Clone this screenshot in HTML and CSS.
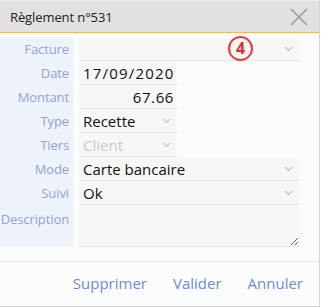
FILE: index.html
```html
<!DOCTYPE html>
<html lang="fr">
<head>
    <meta charset="UTF-8">
    <title>Règlement n°531</title>
    <link rel="stylesheet" href="styles.css">
</head>
<body>
    <div class="dialog">
        <div class="header">
            <span class="title">Règlement n°531</span>
            <svg class="close" width="18" height="18" viewBox="0 0 18 18">
                <path d="M1 1 L17 17 M17 1 L1 17" stroke="#9a9a9a" stroke-width="1.6" fill="none"/>
            </svg>
        </div>

        <div class="form">
            <div class="row">
                <div class="label">Facture</div>
                <div class="field wide select"><span></span><svg class="chev" width="9" height="6" viewBox="0 0 9 6"><path d="M1 1 L4.5 4.5 L8 1" stroke="#c4c4c4" stroke-width="1.2" fill="none"/></svg></div>
            </div>
            <div class="row">
                <div class="label">Date</div>
                <div class="field short"><span class="num">17/09/2020</span></div>
            </div>
            <div class="row">
                <div class="label">Montant</div>
                <div class="field short right"><span class="num">67.66</span></div>
            </div>
            <div class="row">
                <div class="label">Type</div>
                <div class="field short select"><span>Recette</span><svg class="chev" width="9" height="6" viewBox="0 0 9 6"><path d="M1 1 L4.5 4.5 L8 1" stroke="#c4c4c4" stroke-width="1.2" fill="none"/></svg></div>
            </div>
            <div class="row">
                <div class="label">Tiers</div>
                <div class="field short select disabled"><span>Client</span><svg class="chev" width="9" height="6" viewBox="0 0 9 6"><path d="M1 1 L4.5 4.5 L8 1" stroke="#c4c4c4" stroke-width="1.2" fill="none"/></svg></div>
            </div>
            <div class="row">
                <div class="label">Mode</div>
                <div class="field wide select"><span>Carte bancaire</span><svg class="chev" width="9" height="6" viewBox="0 0 9 6"><path d="M1 1 L4.5 4.5 L8 1" stroke="#c4c4c4" stroke-width="1.2" fill="none"/></svg></div>
            </div>
            <div class="row">
                <div class="label">Suivi</div>
                <div class="field wide select"><span>Ok</span><svg class="chev" width="9" height="6" viewBox="0 0 9 6"><path d="M1 1 L4.5 4.5 L8 1" stroke="#c4c4c4" stroke-width="1.2" fill="none"/></svg></div>
            </div>
            <div class="row tall">
                <div class="label top">Description</div>
                <textarea class="field wide area"></textarea>
            </div>
        </div>

        <div class="footer">
            <a class="btn">Supprimer</a>
            <a class="btn">Valider</a>
            <a class="btn">Annuler</a>
        </div>

        <div class="marker">4</div>
    </div>
</body>
</html>
```

FILE: styles.css
```css
* {
    box-sizing: border-box;
}
body {
    margin: 0;
    background-color: #ffffff;
    font-family: "Open Sans", "Noto Sans", sans-serif;
}
.dialog {
    position: relative;
    width: 320px;
    height: 307px;
    background-color: #fbfcfc;
    border-right: 1px solid #d4d4d4;
    border-bottom: 1px solid #d4d4d4;
}
.header {
    height: 33px;
    display: flex;
    align-items: center;
    justify-content: space-between;
    padding: 0 11px 0 10px;
    background-color: #e1e1e1;
    border-top: 1px solid #ececec;
    border-bottom: 1px solid #f5b563;
}
.title {
    font-size: 13px;
    color: #222;
    letter-spacing: -0.1px;
}
.close {
    display: block;
}
.form {
    margin-top: 4px;
}
.row {
    display: flex;
    height: 24px;
}
.row.tall {
    height: 42px;
}
.label {
    width: 73px;
    flex-shrink: 0;
    background-color: #eef2fb;
    color: #8fa4d2;
    font-size: 13px;
    text-align: right;
    padding-right: 4px;
    line-height: 24px;
    margin-right: 6px;
    letter-spacing: -0.1px;
}
.label.top {
    line-height: 22px;
    padding-top: 3px;
}
.field {
    margin-top: 1px;
    height: 23px;
    background-color: #f7f7f7;
    border: none;
    border-bottom: 1px solid #e6e6e6;
    display: flex;
    align-items: center;
    padding: 0 4px;
    font-size: 15px;
    color: #111;
}
.num {
    letter-spacing: 1.2px;
}
.field.right .num {
    letter-spacing: 0.6px;
    margin-right: -1px;
}
.field.short {
    width: 98px;
}
.field.wide {
    width: 220px;
}
.field.right {
    justify-content: flex-end;
}
.field.select {
    justify-content: space-between;
    padding-right: 6px;
}
.field.disabled {
    color: #c9c9c9;
}
.chev {
    display: block;
    flex-shrink: 0;
}
.field.area {
    height: 41px;
    resize: both;
    font-family: inherit;
    outline: none;
}
.footer {
    margin-top: 14px;
    border-top: 1px solid #e5e6e6;
    height: 44px;
    display: flex;
    align-items: center;
    justify-content: flex-end;
    gap: 26px;
    padding-right: 16px;
    padding-bottom: 1px;
}
.btn {
    font-size: 15px;
    color: #6b8dd3;
    cursor: pointer;
}
.marker {
    position: absolute;
    left: 228px;
    top: 36px;
    width: 25px;
    height: 25px;
    border: 2px solid #ec3a3a;
    border-radius: 50%;
    color: #e52b2b;
    font-weight: bold;
    font-size: 16px;
    line-height: 21px;
    text-align: center;
}
```
